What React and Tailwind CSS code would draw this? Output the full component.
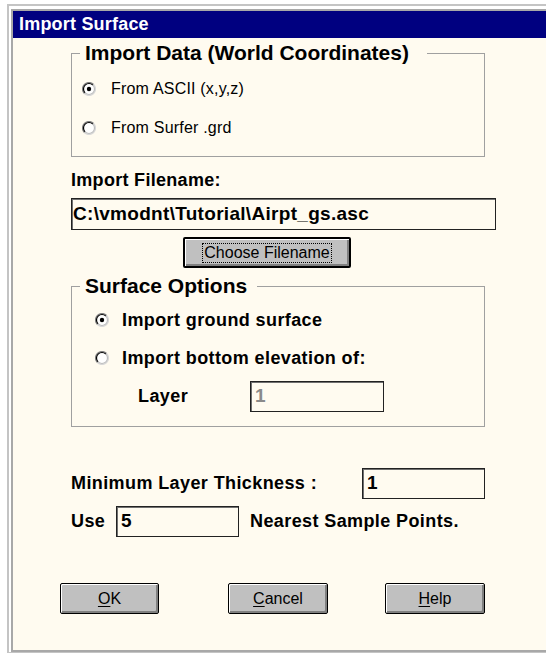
import React from 'react'

// classic 3D radio button, drawn as a small svg
function Radio({ checked }) {
  return (
    <svg width="14" height="14" viewBox="0 0 14 14" className="shrink-0">
      <circle cx="7" cy="7" r="6.5" fill="#fff" />
      <path d="M 2.4 11.6 A 6.5 6.5 0 0 1 11.6 2.4" fill="none" stroke="#808080" strokeWidth="1.2" />
      <path d="M 11.6 2.4 A 6.5 6.5 0 0 1 2.4 11.6" fill="none" stroke="#d8d8d8" strokeWidth="1.2" />
      <path d="M 3.1 10.9 A 5.5 5.5 0 0 1 10.9 3.1" fill="none" stroke="#000" strokeWidth="1.2" />
      <path d="M 10.9 3.1 A 5.5 5.5 0 0 1 3.1 10.9" fill="none" stroke="#bdbdbd" strokeWidth="1.2" />
      {checked && <circle cx="7" cy="7" r="2.2" fill="#000" />}
    </svg>
  )
}

function TextBox({ value, width, muted }) {
  return (
    <div
      className={`h-[31px] ${width} shrink-0 flex items-center pl-[4px] bg-[#fffbf0] border border-[#222] shadow-[inset_1px_1px_0_#707070] text-[19px] font-bold ${muted ? 'text-[#8a8a8a]' : 'text-black'}`}
    >
      {value}
    </div>
  )
}

function PushButton({ children, width }) {
  return (
    <button
      className={`h-[31px] ${width} shrink-0 bg-[#c0c0c0] border border-black rounded-[2px] shadow-[inset_1px_1px_0_#fff,inset_-2px_-2px_0_#808080] text-[16px] text-black leading-none`}
    >
      {children}
    </button>
  )
}

function GroupBox({ title, legendPad, children, className }) {
  return (
    <fieldset className={`w-[414px] border border-[#a0a0a0] ${className}`}>
      <legend className={`ml-[8px] pl-[5px] ${legendPad} text-[21px] font-bold leading-[22px] text-black`}>
        {title}
      </legend>
      {children}
    </fieldset>
  )
}

export default function App() {
  return (
    <div className="w-[546px] h-[653px] overflow-hidden bg-white pl-[7px] pt-[4px] font-['Liberation_Sans',Arial,sans-serif]">
      <div className="border-l-2 border-t-2 border-b border-[#c4c4c4] bg-white pl-[2px] pt-[3px]">
        <div className="border-l-2 border-t-2 border-b-2 border-[#a8a8a8]">
          <div className="h-[27px] bg-[#000080] flex items-center pl-[6px] text-white text-[18px] font-bold tracking-[0.2px]">
            Import Surface
          </div>

          <div className="h-[612px] bg-[#fffbf0] pt-[4px]">
            <div className="pl-[58px]">
              <GroupBox title="Import Data (World Coordinates)" legendPad="pr-[18px]" className="pt-[13px] pb-[16px]">
                <div className="h-[24px] flex items-center pl-[10px] gap-[15px] text-[16px] text-black tracking-[0.2px]">
                  <Radio checked />
                  <span>From ASCII (x,y,z)</span>
                </div>
                <div className="h-[24px] mt-[15px] flex items-center pl-[10px] gap-[15px] text-[16px] text-black tracking-[0.2px]">
                  <Radio />
                  <span>From Surfer .grd</span>
                </div>
              </GroupBox>

              <div className="mt-[12px] h-[22px] flex items-center text-[18px] font-bold text-black tracking-[0.3px]">
                Import Filename:
              </div>
              <div className="mt-[7px] h-[32px] w-[425px] flex items-center pl-[1px] border border-[#222] shadow-[inset_1px_1px_0_#707070] text-[19px] font-bold text-black tracking-[0.3px]">
                C:\vmodnt\Tutorial\Airpt_gs.asc
              </div>

              <div className="mt-[7px] pl-[112px]">
                <button className="h-[31px] w-[168px] bg-[#c0c0c0] border-2 border-black rounded-[2px] shadow-[inset_1px_1px_0_#fff,inset_-2px_-2px_0_#808080] flex items-center justify-center">
                  <span className="border border-dotted border-black px-[1px] text-[16px] leading-[18px] text-black">
                    Choose Filename
                  </span>
                </button>
              </div>

              <GroupBox title="Surface Options" legendPad="pr-[10px]" className="mt-[7px] pt-[11px] pb-[14px]">
                <div className="h-[24px] flex items-center pl-[23px] gap-[13px] text-[18px] font-bold text-black tracking-[0.4px]">
                  <Radio checked />
                  <span>Import ground surface</span>
                </div>
                <div className="h-[24px] mt-[14px] flex items-center pl-[23px] gap-[13px] text-[18px] font-bold text-black tracking-[0.4px]">
                  <Radio />
                  <span>Import bottom elevation of:</span>
                </div>
                <div className="mt-[11px] flex items-center pl-[66px] text-[18px] font-bold text-black tracking-[0.4px]">
                  <span className="w-[112px]">Layer</span>
                  <TextBox value="1" width="w-[134px]" muted />
                </div>
              </GroupBox>

              <div className="mt-[41px] flex items-center text-[18px] font-bold text-black tracking-[0.4px]">
                <span className="w-[291px]">Minimum Layer Thickness :</span>
                <TextBox value="1" width="w-[123px]" />
              </div>
              <div className="mt-[7px] flex items-center text-[18px] font-bold text-black tracking-[0.4px]">
                <span className="w-[45px]">Use</span>
                <TextBox value="5" width="w-[123px]" />
                <span className="ml-[11px]">Nearest Sample Points.</span>
              </div>
            </div>

            <div className="mt-[46px] pl-[47px] flex items-center">
              <PushButton width="w-[99px]">
                <span className="underline underline-offset-2">O</span>K
              </PushButton>
              <div className="ml-[69px]">
                <PushButton width="w-[100px]">
                  <span className="underline underline-offset-2">C</span>ancel
                </PushButton>
              </div>
              <div className="ml-[57px]">
                <PushButton width="w-[100px]">
                  <span className="underline underline-offset-2">H</span>elp
                </PushButton>
              </div>
            </div>
          </div>
        </div>
      </div>
    </div>
  )
}
